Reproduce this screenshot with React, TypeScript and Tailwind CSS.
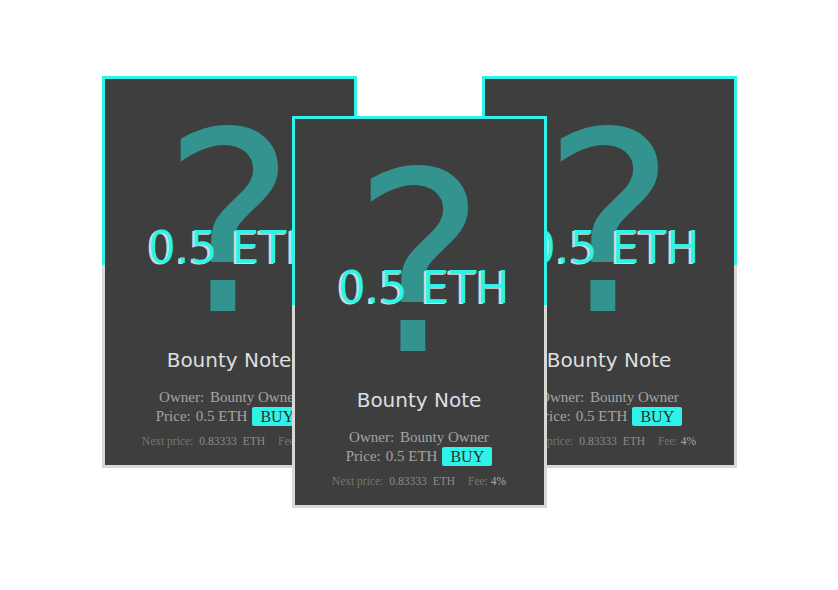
import React from "react";

const sans = { fontFamily: '"DejaVu Sans", Verdana, sans-serif' };
const serif = { fontFamily: '"Liberation Serif", "Times New Roman", serif' };

function Card({ className = "" }: { className?: string }) {
  return (
    <div className={`w-[255px] h-[392px] shrink-0 flex flex-col bg-[#3e3e3e] ${className}`}>
      <div className="relative h-[189px] shrink-0 border-[3px] border-b-0 border-[#2ff3e8]">
        <div
          className="absolute inset-x-0 top-[21px] text-center leading-none text-[250px] text-[#33938f] select-none"
          style={sans}
        >
          ?
        </div>
        <div
          className="absolute inset-x-0 top-[147px] pl-[9px] text-center leading-none text-[44px] text-[#2ff3e8] [text-shadow:-2px_1px_0_#d6d6d2]"
          style={sans}
        >
          0.5 ETH
        </div>
      </div>
      <div className="flex-1 flex flex-col items-center border-[3px] border-t-0 border-[#d9d9d4] pt-[81px]">
        <div className="text-[20px] leading-[28px] text-[#dedede]" style={sans}>
          Bounty Note
        </div>
        <div className="mt-[14px] flex flex-col items-center text-[15px] text-[#a4a4a4]" style={serif}>
          <div className="leading-[19px] flex gap-[6px]">
            <span>Owner:</span>
            <span>Bounty Owner</span>
          </div>
          <div className="leading-[19px] flex items-center gap-[5px]">
            <span className="flex gap-[5px]">
              <span>Price:</span>
              <span>0.5 ETH</span>
            </span>
            <span className="h-[19px] px-[8px] rounded-[2px] bg-[#2ff3e8] text-[#2d2d2d] text-[16px] leading-[19px]">
              BUY
            </span>
          </div>
        </div>
        <div className="mt-[7px] flex text-[11.5px] leading-[16px]" style={serif}>
          <span className="text-[#767676]">Next price:</span>
          <span className="ml-[6px] text-[#8c8c8c]">0.83333</span>
          <span className="ml-[6px] text-[#8c8c8c]">ETH</span>
          <span className="ml-[13px] text-[#767676]">Fee:</span>
          <span className="ml-[3px] text-[#ababab]">4%</span>
        </div>
      </div>
    </div>
  );
}

export default function App() {
  return (
    <div className="w-full min-h-[590px] bg-white flex justify-center items-start pt-[76px]">
      <Card />
      <Card className="relative z-10 mt-[40px] -mx-[65px] h-[391px]" />
      <Card />
    </div>
  );
}
